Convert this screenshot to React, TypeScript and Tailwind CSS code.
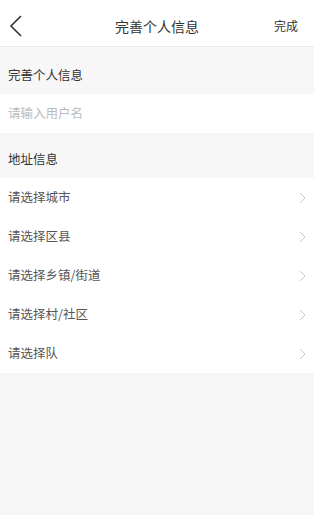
import React from 'react';

const font = { fontFamily: '"Noto Sans CJK SC", "Noto Sans", sans-serif' };

function Chevron() {
  return (
    <svg width="7" height="12" viewBox="0 0 7 12" fill="none">
      <path d="M1 1l5 5-5 5" stroke="#c8c8c8" strokeWidth="1" />
    </svg>
  );
}

const rows = ['请选择城市', '请选择区县', '请选择乡镇/街道', '请选择村/社区', '请选择队'];

export default function App() {
  return (
    <div className="w-[314px] h-[515px] bg-[#f7f7f7] flex flex-col" style={font}>
      <div className="h-[47px] pt-[6px] bg-white border-b border-[#ececec] flex items-center justify-between px-2 relative">
        <svg width="14" height="22" viewBox="0 0 14 22" fill="none" className="ml-[1px]">
          <path d="M12 1L2 11l10 10" stroke="#333" strokeWidth="1.6" />
        </svg>
        <span className="absolute left-0 right-0 top-[6px] bottom-0 flex items-center justify-center text-[14px] text-[#333] pointer-events-none">完善个人信息</span>
        <span className="text-[12px] text-[#333] mr-[8px]">完成</span>
      </div>
      <div className="h-[47px] pt-[9px] flex items-center px-2 text-[12.5px] text-[#333]">完善个人信息</div>
      <div className="h-[39px] bg-white flex items-center px-2 text-[12.5px] text-[#bbbbbb]">请输入用户名</div>
      <div className="h-[45px] pt-[7px] flex items-center px-2 text-[12.5px] text-[#333]">地址信息</div>
      <div className="bg-white flex flex-col">
        {rows.map((r) => (
          <div key={r} className="h-[39px] flex items-center justify-between pl-2 pr-[8px] text-[12.5px] text-[#555]">
            <span>{r}</span>
            <Chevron />
          </div>
        ))}
      </div>
    </div>
  );
}
